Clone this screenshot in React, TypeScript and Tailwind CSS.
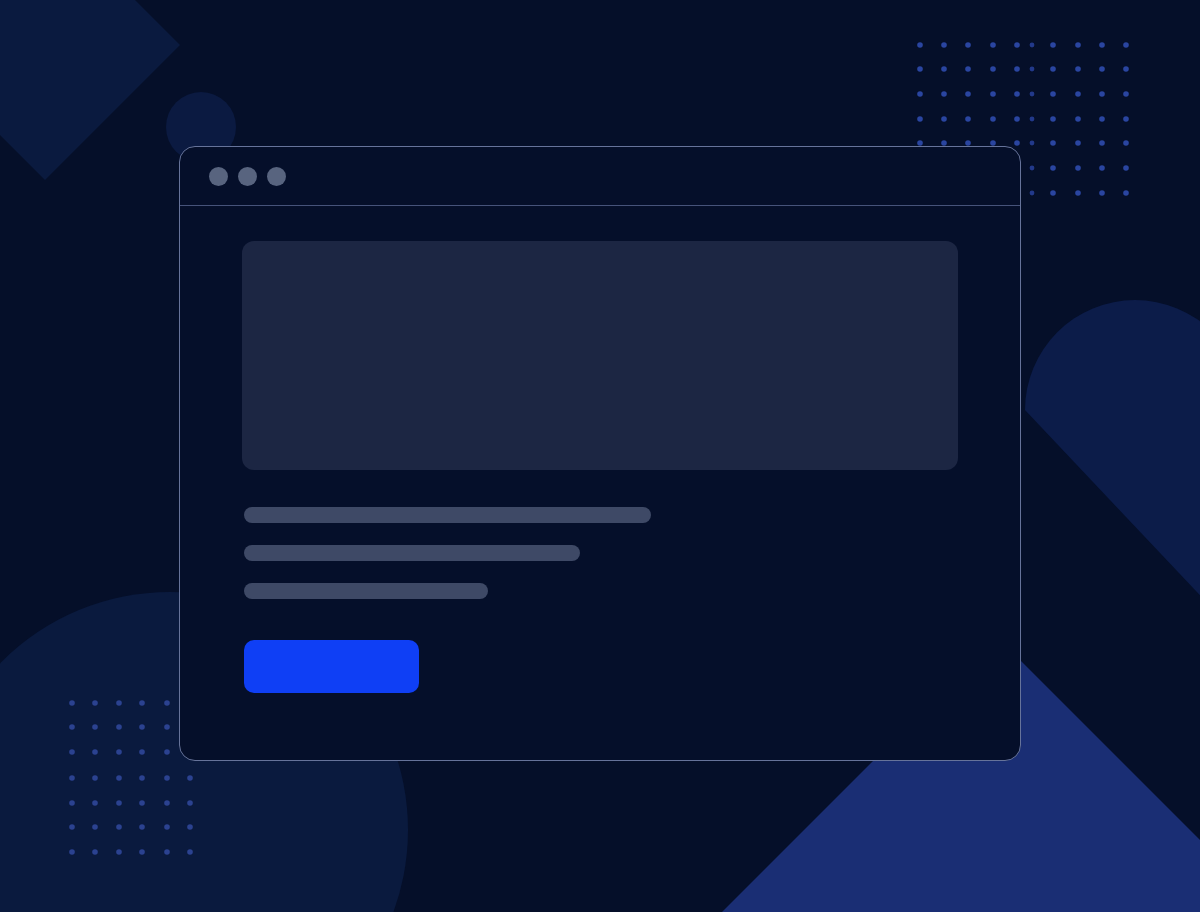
import React from 'react';

const topCols = [920, 944, 968, 993, 1017, 1032, 1053, 1078, 1102, 1126];
const topRows = [45, 69, 94, 119, 143, 168, 193];
const leftCols = [72, 95, 119, 142, 167, 190];
const leftRows = [703, 727, 752, 778, 803, 827, 852];

// decorative shapes behind the window
const Backdrop: React.FC = () => (
  <svg className="absolute inset-0" width={1200} height={912} viewBox="0 0 1200 912">
    <polygon points="45,-90 180,45 45,180 -90,45" fill="#0a1a3f" />
    <circle cx={201} cy={127} r={35} fill="#0b1a41" />
    <circle cx={170} cy={830} r={238} fill="#0a1a3e" />
    <path d="M1025 410 A110 110 0 0 1 1245 410 L1245 643 Z" fill="#0c1c49" />
    <polygon points="997,637 1272,912 722,912" fill="#1a2e74" />
    {topRows.map((y) =>
      topCols.map((x) => (
        <circle key={`t${x}-${y}`} cx={x} cy={y} r={x === 1032 ? 2.4 : 2.8} fill={x === 1032 ? '#22398a' : '#2a45a0'} />
      ))
    )}
    {leftRows.map((y) =>
      leftCols.map((x) => <circle key={`l${x}-${y}`} cx={x} cy={y} r={2.8} fill="#2b4290" />)
    )}
  </svg>
);

const App: React.FC = () => {
  return (
    <div className="relative w-[1200px] h-[912px] overflow-hidden bg-[#050f29]">
      <Backdrop />

      <div className="relative z-10 pt-[146px] pl-[179px]">
        <div className="w-[842px] h-[615px] rounded-[16px] border-[1.5px] border-[#66739a] bg-[#050f2a] flex flex-col">
          {/* window bar */}
          <div className="h-[59px] shrink-0 border-b-[1.5px] border-[#46537a] flex items-center gap-[10px] pl-[29px]">
            <span className="w-[19px] h-[19px] rounded-full bg-[#58647f]" />
            <span className="w-[19px] h-[19px] rounded-full bg-[#58647f]" />
            <span className="w-[19px] h-[19px] rounded-full bg-[#58647f]" />
          </div>

          {/* page content */}
          <div className="flex flex-col pt-[35px] px-[62px]">
            <div className="w-[716px] h-[229px] rounded-[12px] bg-[#1c2643]" />
            <div className="flex flex-col gap-[22px] mt-[37px] ml-[2px]">
              <div className="w-[407px] h-[16px] rounded-full bg-[#3e4966]" />
              <div className="w-[336px] h-[16px] rounded-full bg-[#3e4966]" />
              <div className="w-[244px] h-[16px] rounded-full bg-[#3e4966]" />
            </div>
            <div className="mt-[41px] ml-[2px] w-[175px] h-[53px] rounded-[10px] bg-[#0f3ff5]" />
          </div>
        </div>
      </div>
    </div>
  );
};

export default App;
